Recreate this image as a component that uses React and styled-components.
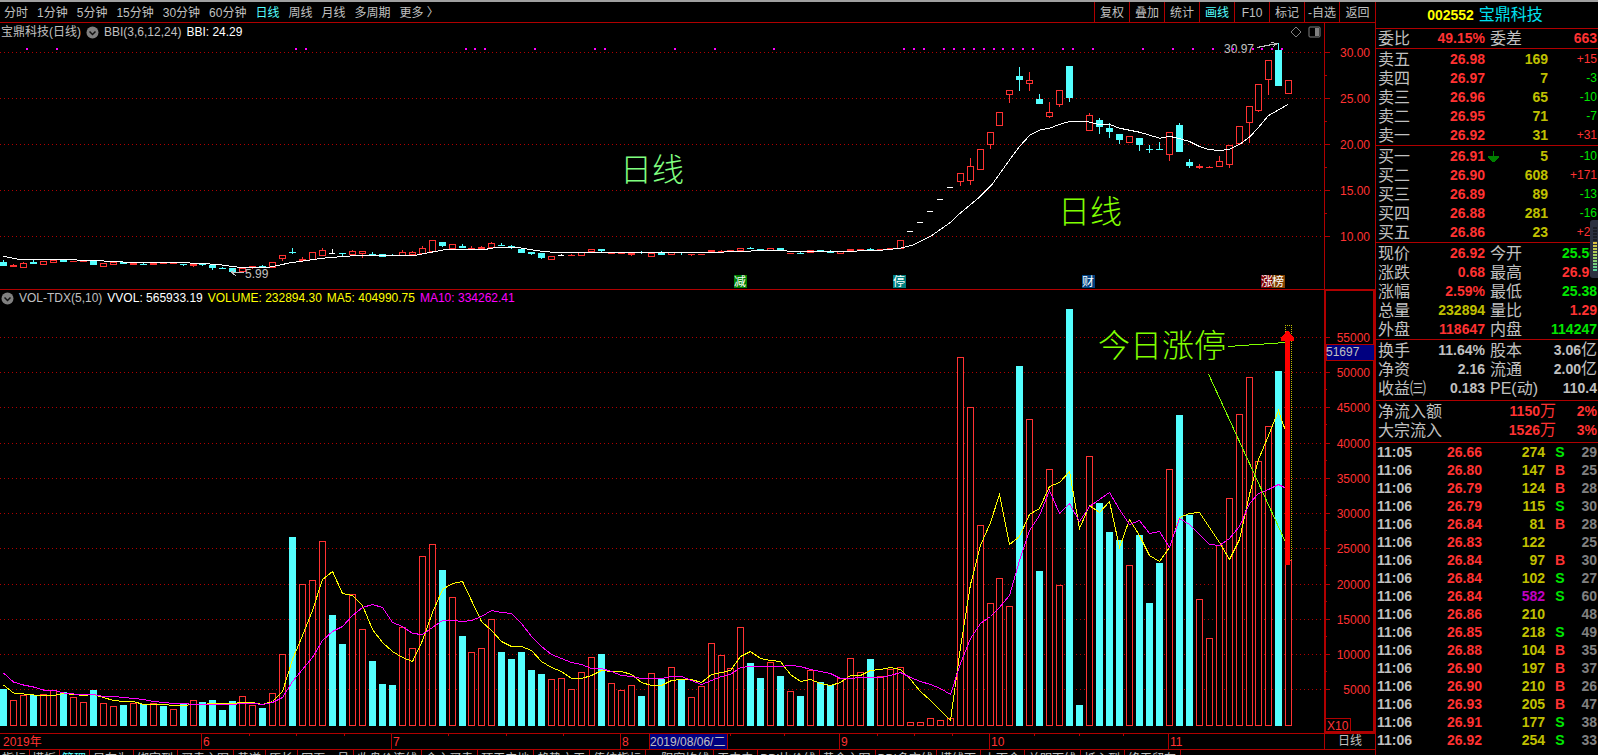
import React from "react";
import styled, { createGlobalStyle, css } from "styled-components";

const RED = "#ff3232";
const LINE = "#b00000";
const CYAN = "#54ffff";
const GRAY = "#c0c0c0";
const YELLOW = "#c0c000";
const GREEN = "#00e600";
const MAGENTA = "#ff00ff";
const LIME = "#80ff00";

const GlobalStyle = createGlobalStyle`
  * {
    box-sizing: border-box;
  }

  body {
    margin: 0;
    background: #000;
    color: ${GRAY};
    font-family: "Liberation Sans", "Noto Sans CJK SC", sans-serif;
    font-size: 12px;
  }
`;

const Page = styled.div`
  display: flex;
  height: 100vh;
  overflow: hidden;
  border-top: 2px solid #a0a0a0;
`;

const Main = styled.main`
  flex: 1;
  min-width: 0;
  display: flex;
  flex-direction: column;
`;

const Toolbar = styled.nav`
  display: flex;
  justify-content: space-between;
  flex: none;
  height: 21px;
  border-bottom: 1px solid ${LINE};
`;

const PeriodList = styled.div`
  display: flex;
  gap: 9px;
  padding-left: 4px;
`;

const PlainButton = styled.button`
  height: 20px;
  padding: 0;
  border: 0;
  background: none;
  font: inherit;
  line-height: 22px;
  white-space: nowrap;
  color: ${(props) => (props.$active ? CYAN : GRAY)};
  cursor: pointer;
`;

const ToolList = styled.div`
  display: flex;
`;

const ToolButton = styled(PlainButton)`
  width: 35px;
  border-left: 1px solid ${LINE};

  &:last-child {
    width: 36px;
  }
`;

const Pane = styled.section`
  display: flex;
  min-height: 0;
  ${(props) =>
    props.$grow
      ? css`
          flex: 1;
        `
      : css`
          flex: none;
          height: 267px;
          border-bottom: 1px solid ${LINE};
        `}
`;

const PaneBody = styled.div`
  flex: 1;
  min-width: 0;
  display: flex;
  flex-direction: column;
`;

const InfoRow = styled.div`
  display: flex;
  align-items: center;
  gap: 5px;
  flex: none;
  height: ${(props) => props.$height}px;
  padding: 0 3px 0 1px;
  line-height: ${(props) => props.$height}px;
  white-space: nowrap;
`;

const InfoText = styled.span`
  color: ${(props) => props.$color || GRAY};
`;

const InfoIcons = styled.span`
  display: flex;
  align-items: center;
  gap: 6px;
  margin-left: auto;
`;

const Plot = styled.svg`
  display: block;
  width: 100%;
  flex: 1;
  min-height: 0;
`;

const Axis = styled.svg`
  display: block;
  flex: none;
  width: 51px;
  height: 100%;
`;

const TimeRow = styled.div`
  display: flex;
  flex: none;
  height: 17px;
  border-top: 1px solid ${LINE};
  border-bottom: 1px solid ${LINE};
`;

const PeriodCell = styled.div`
  flex: none;
  width: 51px;
  border-left: 1px solid ${LINE};
  line-height: 15px;
  text-align: center;
`;

const TemplateBar = styled.div`
  display: flex;
  flex: none;
  height: 5px;
  overflow: hidden;
`;

const TemplateTab = styled(PlainButton)`
  flex: none;
  height: 18px;
  line-height: 18px;
  padding: ${(props) => (props.$tight ? "0 3px 0 2px" : "0 4px 0 3px")};
  border-right: 1px solid ${LINE};
`;

const Side = styled.aside`
  position: relative;
  flex: none;
  width: 223px;
  border-left: 1px solid ${LINE};
`;

const StockTitle = styled.h1`
  display: flex;
  justify-content: center;
  gap: 5px;
  height: 27px;
  margin: 0;
  padding-right: 4px;
  border-bottom: 1px solid ${LINE};
  font-size: 16px;
  font-weight: 400;
  line-height: 26px;
  color: #00e0f0;
`;

const StockCode = styled.span`
  color: #ffff00;
  font-size: 14px;
  font-weight: 700;
`;

const Block = styled.div`
  height: ${(props) => props.$height}px;
  padding: ${(props) => (props.$flush ? 0 : 1)}px 1px 0 1px;
  border-bottom: 1px solid ${LINE};
`;

const Table = styled.table`
  width: 100%;
  table-layout: fixed;
  border-collapse: collapse;
`;

const Label = styled.th`
  height: 19px;
  padding: 0 0 0 ${(props) => (props.$second ? 5 : 1)}px;
  font-size: 16px;
  font-weight: 400;
  line-height: 19px;
  text-align: left;
  white-space: nowrap;
`;

const Value = styled.td`
  height: ${(props) => props.$height || 19}px;
  padding: 0;
  font-size: 14px;
  font-weight: 700;
  line-height: ${(props) => props.$height || 19}px;
  text-align: ${(props) => props.$align || "right"};
  white-space: nowrap;
  color: ${(props) => props.$color || GRAY};
`;

const Delta = styled(Value)`
  font-size: 12px;
  font-weight: 400;
`;

const Unit = styled.span`
  font-size: 16px;
  font-weight: 400;
  line-height: 1;
`;

const DownArrow = styled.svg`
  display: block;
  margin: 0 auto;
`;

// floating meter pinned to the window edge
const Meter = styled.div`
  position: absolute;
  top: 218px;
  right: 0;
  width: 8px;
  height: 58px;
  padding: 6px 1px 6px 3px;
  border-radius: 3px 0 0 3px;
  background: #2b3040;
`;

const MeterBars = styled.div`
  height: 46px;
  background: repeating-linear-gradient(#2b3040 0 1px, transparent 1px 3px),
    linear-gradient(#1a1d26 0 16px, #e0c040 16px, #a0d060 30px, #50d0a0 46px);
`;

const PERIODS = [
  "分时", "1分钟", "5分钟", "15分钟", "30分钟", "60分钟",
  "日线", "周线", "月线", "多周期", "更多 〉",
];
const TOOLS = ["复权", "叠加", "统计", "画线", "F10", "标记", "-自选", "返回"];
const TEMPLATES = [
  "指标", "模板", "管理", "另存为", "绑定到", "买卖主图", "黄道", "原长",
  "网页一号", "收盘价连线", "金主买卖", "顶天立地", "趋势之王", "传统指标",
  "一阳穿均线", "天中内", "BBI比价线", "黄金主图", "BBI多空线", "摸线下",
  "上下金", "益明下线", "抵心到", "终无留存",
];

// days are 10px apart, one pixel is dropped about every 26 days
const dayX = (i) => 3 + i * 10 - Math.floor((i + 6.5) / 26.5);

// top of each volume bar, "c" = falling day
const VOLUME = `c689 r700 r695 c695 r694 r690 c692 r697 r702 c690 r703 r706 c705 r703 c704
r703 c706 r709 c704 r700 c702 c700 c710 c701 r696 r705 c708 r693 r654 c537
r584 r580 r541 c615 c644 r594 r629 c661 c684 c685 r627 r648 r556 r544 c570
r597 c636 r652 r648 r619 c652 c659 c652 c670 c674 r679 r678 r689 r672 r657
c654 r683 r690 r685 c696 r673 c679 r667 c679 r697 r686 r643 r655 r668 r627
c663 c678 r662 c676 r691 c696 r670 c682 c685 r678 r658 r672 c659 r676 r669
r667 r722 r722 r718 r720 r718 r357 r407 r525 r603 r578 r606 c366 r419 c571
r469 r585 c309 c705 r456 c503 c532 c540 r565 c535 c603 c563 r469 c415 c515
r599 r638 r545 r498 r414 r377 r461 r426 c371 r560`
  .split(/\s+/)
  .map((s) => ({ down: s[0] === "c", y: Number(s.slice(1)) }));

// average of the last n bars, with the leading days given
const average = (n, lead) =>
  VOLUME.map((bar, i) => {
    if (i < lead.length) return `${dayX(i) + 0.5},${lead[i]}`;
    const part = VOLUME.slice(Math.max(0, i - n + 1), i + 1);
    const y = part.reduce((sum, b) => sum + b.y, 0) / part.length;
    return `${dayX(i) + 0.5},${Math.round(y) + 0.5}`;
  }).join(" ");
const MA5 = average(5, [685, 693, 694, 695]);
const MA10 = average(10, [673, 682, 685, 687, 690, 690, 693, 694, 695]);

// colour, high, body top, body bottom, low (thirds of a pixel); "-" = no candle
const CANDLES = `c 780 786 798 798|r 792 795 800 800|r 786 790 803 803|c 780 786 791 791
|r 783 783 794 794|r 780 780 788 788|c 780 780 786 786|r 783 783 786 786|r 783 783 786 786
|c 780 780 795 795|r 789 789 800 800|r 786 786 795 795|c 785 785 791 791|r 788 788 794 794
|c 788 791 794 794|r 788 788 794 794|r 788 788 791 791|r 789 789 792 792|c 792 792 795 798
|r 792 792 797 800|c 789 792 795 798|c 795 795 804 809|c 801 804 807 807|c 804 804 816 816
|r 804 804 816 816|r 798 798 801 806|c 795 799 802 802|r 786 786 803 803|r 765 765 777 782
|c 744 756 759 762|r 771 778 784 784|r 756 756 780 780|r 744 750 768 768|w 747 759 762 762
|c 759 759 762 768|r 750 753 766 766|r 753 753 762 773|c 756 762 766 766|c 762 762 770 770
|c 762 765 768 768|r 750 756 769 769|r 753 756 766 766|r 738 744 762 762|r 720 720 756 756
|c 726 726 738 741|r 732 732 747 747|c 732 738 744 744|r 738 744 747 747|r 738 741 747 747
|r 726 729 744 744|c 729 735 738 738|c 735 739 742 747|c 747 747 759 759|c 755 755 761 765
|c 759 759 774 777|r 769 769 780 780|w 762 765 768 768|r 761 765 768 768|r 757 757 768 768
|r 747 747 756 756|c 747 747 753 756|r 758 758 761 761|r 758 758 761 761|r 759 759 765 768
|c 753 757 759 762|r 758 758 772 772|c 753 757 765 765|r 757 757 765 765|c 756 756 760 765
|r 761 761 765 768|r 761 761 765 765|r 750 750 756 756|r 749 753 757 757|r 750 750 756 756
|r 744 744 753 753|c 740 744 747 747|c 746 746 750 753|r 744 744 752 752|c 744 744 752 752
|r 759 759 762 762|c 755 759 762 762|r 750 750 758 758|c 749 749 754 754|c 750 754 759 759
|r 753 753 762 762|r 747 747 754 754|r 747 747 754 754|c 743 747 752 752|r 747 747 751 751
|r 744 744 747 747|r 720 720 747 747|w 693 693 696 696|w 666 666 669 669|w 633 633 636 636
|w 597 597 600 600|w 561 561 564 564|r 519 519 546 558|r 474 498 543 555|r 447 447 510 510
|r 396 396 435 447|r 336 336 378 378|r 270 270 285 309|c 201 228 240 273|r 216 240 252 273
|c 282 297 312 312|r 306 336 352 355|r 270 270 315 321|c 198 198 294 306|-
|r 339 345 393 393|c 354 360 381 402|c 369 384 396 414|c 402 402 420 432|r 408 408 429 429
|c 414 414 435 453|c 435 447 450 459|c 426 447 450 450|r 396 396 465 483|c 369 375 456 456
|c 477 486 498 504|r 492 498 504 507|r 497 500 503 503|r 468 483 501 501|r 435 435 495 504
|r 378 378 432 432|r 318 318 369 429|r 252 252 333 336|r 180 180 240 285|c 129 150 258 258
|r 240 240 282 282`
  .split("|")
  .map((s) => {
    const [kind, ...values] = s.trim().split(" ");
    return { kind, values: values.map((v) => Math.round(v / 3)) };
  });

const BBI = `10,769 56,778 203,779 294,782 355,785 385,787 527,787 649,793 710,801 811,801
872,788 974,774 1075,766 1247,766 1339,748 1458,748 1490,742 1550,742 1610,752 1670,758
1980,757 2115,759 2210,754 2355,751 2365,754 2540,755 2600,751 2640,751 2700,745 2740,735
2790,710 2850,668 2880,640 2910,615 2940,590 2975,555 3000,520 3030,478 3060,438 3090,405
3120,390 3150,384 3180,373 3210,364 3260,364 3290,372 3330,374 3360,385 3420,397 3480,415
3508,409 3540,416 3570,425 3600,440 3625,448 3660,452 3690,447 3720,432 3750,410 3780,377
3805,347 3835,330 3864,313`
  .split(/\s+/)
  .map((p) => p.split(",").map((n) => (n / 3).toFixed(1)).join(","))
  .join(" ");

const SIGNALS = [
  27, 57, 296, 306, 466, 475, 485, 535, 595, 605, 675, 715, 774, 904, 914, 924,
  944, 954, 964, 974, 984, 994, 1003, 1013, 1023, 1033, 1063, 1073, 1093, 1143,
  1173, 1193, 1213, 1233, 1253, 1262, 1272, 1282,
];

const TAGS = [
  { x: 734, text: "减", fill: "#008000" },
  { x: 893, text: "停", fill: "#008080" },
  { x: 1082, text: "财", fill: "#004080" },
  { x: 1261, text: "涨", fill: "#800000" },
  { x: 1272, text: "榜", fill: "#804000" },
];

const PRICE_AXIS = [["30.00", 52], ["25.00", 98], ["20.00", 144], ["15.00", 190], ["10.00", 236]];
const VOLUME_AXIS = [
  ["55000", 337], ["50000", 372], ["45000", 407], ["40000", 443], ["35000", 478], ["30000", 513],
  ["25000", 548], ["20000", 584], ["15000", 619], ["10000", 654], ["5000", 689],
];
const MONTHS = [["6", 201], ["7", 391], ["8", 620], ["9", 839], ["10", 989], ["11", 1168]];
const WEEK_TICKS = [249, 296, 344, 448, 506, 563, 730, 784, 877, 914, 952, 1034, 1079, 1123];

const SELLS = [
  ["卖五", "26.98", "169", "+15"],
  ["卖四", "26.97", "7", "-3"],
  ["卖三", "26.96", "65", "-10"],
  ["卖二", "26.95", "71", "-7"],
  ["卖一", "26.92", "31", "+31"],
];
const BUYS = [
  ["买一", "26.91", "5", "-10", true],
  ["买二", "26.90", "608", "+171"],
  ["买三", "26.89", "89", "-13"],
  ["买四", "26.88", "281", "-16"],
  ["买五", "26.86", "23", "+23"],
];
const COMMISSION = [["委比", "49.15%", RED, "委差", "663", RED]];
const QUOTES = [
  ["现价", "26.92", RED, "今开", "25.50", GREEN],
  ["涨跌", "0.68", RED, "最高", "26.99", RED],
  ["涨幅", "2.59%", RED, "最低", "25.38", GREEN],
  ["总量", "232894", YELLOW, "量比", "1.29", RED],
  ["外盘", "118647", RED, "内盘", "114247", GREEN],
];
const FUNDAMENTALS = [
  ["换手", "11.64%", GRAY, "股本", "3.06", GRAY, "亿"],
  ["净资", "2.16", GRAY, "流通", "2.00", GRAY, "亿"],
  ["收益㈢", "0.183", GRAY, "PE(动)", "110.4", GRAY],
];
const FLOWS = [["净流入额", "1150", "2%"], ["大宗流入", "1526", "3%"]];
const TRADES = [
  ["11:05", "26.66", "274", "S", "29"],
  ["11:06", "26.80", "147", "B", "25"],
  ["11:06", "26.79", "124", "B", "28"],
  ["11:06", "26.79", "115", "S", "30"],
  ["11:06", "26.84", "81", "B", "28"],
  ["11:06", "26.83", "122", "", "25"],
  ["11:06", "26.84", "97", "B", "30"],
  ["11:06", "26.84", "102", "S", "27"],
  ["11:06", "26.84", "582", "S", "60"],
  ["11:06", "26.86", "210", "", "48"],
  ["11:06", "26.85", "218", "S", "49"],
  ["11:06", "26.88", "104", "B", "35"],
  ["11:06", "26.90", "197", "B", "37"],
  ["11:06", "26.90", "210", "B", "26"],
  ["11:06", "26.93", "205", "B", "47"],
  ["11:06", "26.91", "177", "S", "38"],
  ["11:06", "26.92", "254", "S", "33"],
];

function FoldIcon() {
  return (
    <svg width="13" height="13" viewBox="0 0 13 13" aria-hidden="true">
      <circle cx="6.5" cy="6.5" r="6" fill="#808080" />
      <path d="M3.5 5.5l3 3 3-3" fill="none" stroke="#101010" strokeWidth="1.5" />
    </svg>
  );
}

function GridLine({ y }) {
  return (
    <line x1="0" x2="1322" y1={y + 0.5} y2={y + 0.5} stroke={LINE} strokeDasharray="1 3" />
  );
}

function Candle({ index, kind, values }) {
  if (kind === "-") return null;
  const [high, top, bottom, low] = values;
  const x = dayX(index);
  const color = kind === "r" ? RED : kind === "c" ? CYAN : "#fff";
  const height = Math.max(1, bottom - top);
  const hollow = kind === "r" && height > 2;
  const width = kind === "w" ? 6 : 7;
  return (
    <g>
      {top > high && <rect x={x} y={high} width="1" height={top - high} fill={color} />}
      {low > bottom && <rect x={x} y={bottom} width="1" height={low - bottom} fill={color} />}
      {hollow ? (
        <rect x={x - 2.5} y={top + 0.5} width="6" height={height - 1} fill="#000" stroke={color} />
      ) : (
        <rect x={x - 3} y={top} width={width} height={height} fill={color} />
      )}
    </g>
  );
}

function PriceChart() {
  return (
    <Plot viewBox="0 41 1324 248" preserveAspectRatio="none" shapeRendering="crispEdges">
      {PRICE_AXIS.map(([label, y]) => (
        <GridLine key={label} y={y} />
      ))}
      {CANDLES.map((candle, i) => (
        <Candle key={i} index={i} kind={candle.kind} values={candle.values} />
      ))}
      <polyline points={BBI} fill="none" stroke="#fff" />
      <text x="1224" y="53" fontSize="12" fill={GRAY}>30.97</text>
      <path d="M1257 47.5L1277 43.5M1271 42.5L1277 43.5L1273 47" fill="none" stroke={GRAY} />
      <text x="245" y="278" fontSize="12" fill={GRAY}>5.99</text>
      <path d="M244 272.5H232M236 276L231 272L236 269" fill="none" stroke={GRAY} />
      {SIGNALS.map((x) => (
        <rect key={x} x={x - 1} y="48" width="2" height="2" fill={MAGENTA} />
      ))}
      <text x="620" y="181" fontSize="32" fontWeight="300" fill="#80ff80">日线</text>
      <text x="1058" y="223" fontSize="32" fontWeight="300" fill={LIME}>日线</text>
      {TAGS.map((tag) => (
        <g key={tag.text}>
          <rect x={tag.x} y="275" width="13" height="13" fill={tag.fill} />
          <text x={tag.x} y="286" fontSize="12" fill="#fff">{tag.text}</text>
        </g>
      ))}
    </Plot>
  );
}

function PriceAxis() {
  return (
    <Axis viewBox="1324 23 51 266" shapeRendering="crispEdges">
      <rect x="1324" y="23" width="1" height="266" fill={LINE} />
      {PRICE_AXIS.map(([label, y]) => (
        <g key={label}>
          <rect x="1325" y={y} width="5" height="1" fill={LINE} />
          {y < 236 && <rect x="1325" y={y + 23} width="2" height="1" fill={LINE} />}
          <text x="1370" y={y + 5} fontSize="12" textAnchor="end" fill={RED}>{label}</text>
        </g>
      ))}
    </Axis>
  );
}

function VolumeChart() {
  return (
    <Plot viewBox="0 306 1324 427" preserveAspectRatio="none" shapeRendering="crispEdges">
      {VOLUME_AXIS.map(([label, y]) => (
        <GridLine key={label} y={y} />
      ))}
      {VOLUME.map(({ down, y }, i) =>
        down ? (
          <rect key={i} x={dayX(i) - 3} y={y} width="7" height={726 - y} fill={CYAN} />
        ) : (
          <rect key={i} x={dayX(i) - 2.5} y={y + 0.5} width="6" height={725 - y} fill="#000" stroke={RED} />
        )
      )}
      <polyline points={MA5} fill="none" stroke="#ffff00" />
      <polyline points={MA10} fill="none" stroke={MAGENTA} />
      <path d="M1285.5 560V325.5H1291.5V560" fill="none" stroke={YELLOW} strokeDasharray="1 1" />
      <text x="1098" y="357" fontSize="32" fontWeight="300" fill={LIME}>今日涨停</text>
      <path d="M1228 346.5L1285 342.5M1208.5 374L1280 530L1285 541" fill="none" stroke={LIME} />
      <path
        d="M1285 565V341H1281V338L1283 335H1284L1286 331H1289L1291 335H1292L1294 338V341H1290V565Z"
        fill="#ff0000"
      />
    </Plot>
  );
}

function VolumeAxis() {
  return (
    <Axis viewBox="1324 290 51 443" preserveAspectRatio="none" shapeRendering="crispEdges">
      <rect x="1325" y="290" width="49" height="442" fill="none" stroke={LINE} strokeWidth="2" />
      {VOLUME_AXIS.map(([label, y]) => (
        <g key={label}>
          <rect x="1326" y={y} width="4" height="1" fill={LINE} />
          {y < 689 && <rect x="1326" y={y + 17} width="1" height="1" fill={LINE} />}
          <text x="1370" y={y + 5} fontSize="12" textAnchor="end" fill={RED}>{label}</text>
        </g>
      ))}
      <rect x="1326" y="344.5" width="48" height="16" fill="#000080" stroke={LINE} />
      <text x="1326" y="356" fontSize="12" fill={GRAY}>51697</text>
      <path d="M1326 718.5H1350.5V732" fill="none" stroke={LINE} />
      <text x="1327" y="730" fontSize="12" fill={RED}>X10</text>
    </Axis>
  );
}

function TimeAxis() {
  return (
    <Plot viewBox="0 734 1324 15" preserveAspectRatio="none" shapeRendering="crispEdges">
      <text x="3" y="746" fontSize="12" fill={RED}>2019年</text>
      {MONTHS.map(([label, x]) => (
        <g key={label}>
          <rect x={x} y="734" width="1" height="15" fill={LINE} />
          <text x={x + 2} y="746" fontSize="12" fill={RED}>{label}</text>
        </g>
      ))}
      {WEEK_TICKS.map((x) => (
        <rect key={x} x={x} y="734" width="1" height="2" fill={LINE} />
      ))}
      <rect x="649.5" y="733.5" width="78" height="16" fill="#000080" stroke={LINE} />
      <text x="650" y="746" fontSize="12" fill={GRAY}>2019/08/06/二</text>
    </Plot>
  );
}

function BookTable({ rows }) {
  return (
    <Table>
      <colgroup>
        <col width="47" />
        <col width="61" />
        <col width="17" />
        <col width="46" />
        <col />
      </colgroup>
      <tbody>
        {rows.map(([label, price, amount, delta, arrow]) => (
          <tr key={label}>
            <Label scope="row">{label}</Label>
            <Value $color={RED}>{price}</Value>
            <Value>
              {arrow && (
                <DownArrow width="11" height="12" viewBox="0 0 11 12" shapeRendering="crispEdges">
                  <path d="M5 0h1v5h5v2L6 11H5L0 7V5h5z" fill="#008000" />
                </DownArrow>
              )}
            </Value>
            <Value $color={YELLOW}>{amount}</Value>
            <Delta $color={delta[0] === "+" ? RED : GREEN}>{delta}</Delta>
          </tr>
        ))}
      </tbody>
    </Table>
  );
}

function QuoteTable({ rows }) {
  return (
    <Table>
      <colgroup>
        <col width="49" />
        <col width="59" />
        <col width="50" />
        <col />
      </colgroup>
      <tbody>
        {rows.map(([label, value, color, label2, value2, color2, unit]) => (
          <tr key={label}>
            <Label scope="row">{label}</Label>
            <Value $color={color}>{value}</Value>
            <Label scope="row" $second>{label2}</Label>
            <Value $color={color2}>
              {value2}
              {unit && <Unit>{unit}</Unit>}
            </Value>
          </tr>
        ))}
      </tbody>
    </Table>
  );
}

function FlowTable() {
  return (
    <Table>
      <colgroup>
        <col width="80" />
        <col width="99" />
        <col />
      </colgroup>
      <tbody>
        {FLOWS.map(([label, value, rate]) => (
          <tr key={label}>
            <Label scope="row">{label}</Label>
            <Value $color={RED}>
              {value}
              <Unit>万</Unit>
            </Value>
            <Value $color={RED}>{rate}</Value>
          </tr>
        ))}
      </tbody>
    </Table>
  );
}

function TradeTable() {
  return (
    <Table>
      <colgroup>
        <col width="46" />
        <col width="59" />
        <col width="63" />
        <col width="30" />
        <col />
      </colgroup>
      <tbody>
        {TRADES.map(([time, price, amount, side, count], i) => (
          <tr key={i}>
            <Value $height={18} $align="left">{time}</Value>
            <Value $height={18} $color={RED}>{price}</Value>
            <Value $height={18} $color={amount === "582" ? "#c000c0" : YELLOW}>{amount}</Value>
            <Value $height={18} $align="center" $color={side === "S" ? GREEN : RED}>{side}</Value>
            <Value $height={18} $color="#808080">{count}</Value>
          </tr>
        ))}
      </tbody>
    </Table>
  );
}

const TradeList = styled.div`
  padding: 0 1px;
`;

export default function App() {
  return (
    <>
      <GlobalStyle />
      <Page>
        <Main>
          <Toolbar>
            <PeriodList>
              {PERIODS.map((name) => (
                <PlainButton key={name} $active={name === "日线"}>{name}</PlainButton>
              ))}
            </PeriodList>
            <ToolList>
              {TOOLS.map((name) => (
                <ToolButton key={name} $active={name === "画线"}>{name}</ToolButton>
              ))}
            </ToolList>
          </Toolbar>
          <Pane>
            <PaneBody>
              <InfoRow $height={18}>
                <InfoText>宝鼎科技(日线)</InfoText>
                <FoldIcon />
                <InfoText>BBI(3,6,12,24)</InfoText>
                <InfoText $color="#fff">BBI: 24.29</InfoText>
                <InfoIcons>
                  <svg width="12" height="12" viewBox="0 0 12 12" aria-hidden="true">
                    <path d="M6 1l5 5-5 5-5-5z" fill="none" stroke="#808080" />
                  </svg>
                  <svg width="13" height="12" viewBox="0 0 13 12" aria-hidden="true">
                    <rect x="1" y="1" width="11" height="10" rx="1" fill="none" stroke="#808080" />
                    <rect x="7" y="2" width="4" height="8" fill="#808080" />
                  </svg>
                </InfoIcons>
              </InfoRow>
              <PriceChart />
            </PaneBody>
            <PriceAxis />
          </Pane>
          <Pane $grow>
            <PaneBody>
              <InfoRow $height={16}>
                <FoldIcon />
                <InfoText>VOL-TDX(5,10)</InfoText>
                <InfoText $color="#fff">VVOL: 565933.19</InfoText>
                <InfoText $color="#ffff00">VOLUME: 232894.30</InfoText>
                <InfoText $color="#ffff00">MA5: 404990.75</InfoText>
                <InfoText $color={MAGENTA}>MA10: 334262.41</InfoText>
              </InfoRow>
              <VolumeChart />
            </PaneBody>
            <VolumeAxis />
          </Pane>
          <TimeRow>
            <TimeAxis />
            <PeriodCell>日线</PeriodCell>
          </TimeRow>
          <TemplateBar>
            {TEMPLATES.map((name, i) => (
              <TemplateTab
                key={name}
                $tight={i < 3 || name.startsWith("BBI")}
                $active={name === "管理"}
              >
                {name}
              </TemplateTab>
            ))}
          </TemplateBar>
        </Main>
        <Side>
          <StockTitle>
            <StockCode>002552</StockCode>
            宝鼎科技
          </StockTitle>
          <Block $height={20} $flush>
            <QuoteTable rows={COMMISSION} />
          </Block>
          <Block $height={97}>
            <BookTable rows={SELLS} />
          </Block>
          <Block $height={97}>
            <BookTable rows={BUYS} />
          </Block>
          <Block $height={97}>
            <QuoteTable rows={QUOTES} />
          </Block>
          <Block $height={61}>
            <QuoteTable rows={FUNDAMENTALS} />
          </Block>
          <Block $height={42}>
            <FlowTable />
          </Block>
          <TradeList>
            <TradeTable />
          </TradeList>
          <Meter>
            <MeterBars />
          </Meter>
        </Side>
      </Page>
    </>
  );
}
